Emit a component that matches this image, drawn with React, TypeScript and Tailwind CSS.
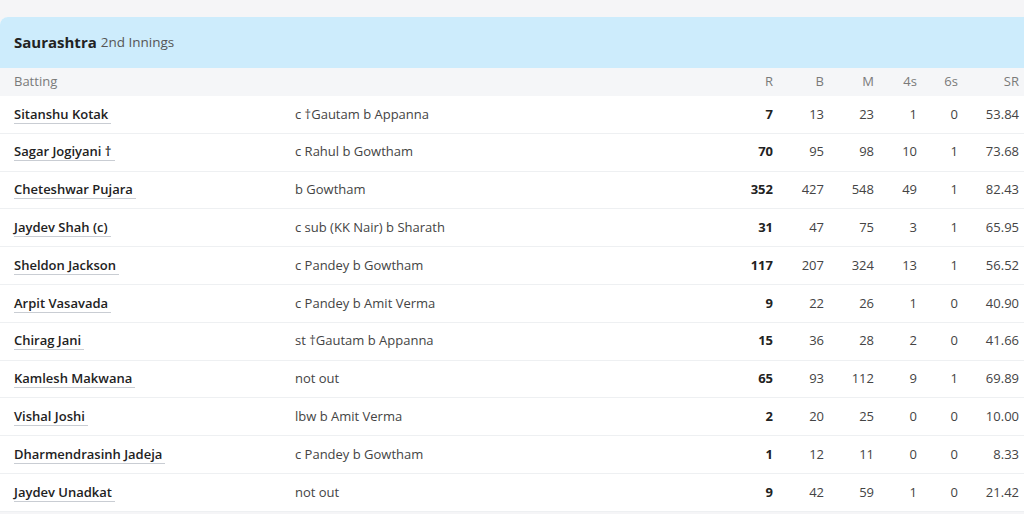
import React from 'react';

type Row = {
  name: string;
  out: string;
  r: string;
  b: string;
  m: string;
  fours: string;
  sixes: string;
  sr: string;
};

const rows: Row[] = [
  { name: 'Sitanshu Kotak', out: 'c \u2020Gautam b Appanna', r: '7', b: '13', m: '23', fours: '1', sixes: '0', sr: '53.84' },
  { name: 'Sagar Jogiyani \u2020', out: 'c Rahul b Gowtham', r: '70', b: '95', m: '98', fours: '10', sixes: '1', sr: '73.68' },
  { name: 'Cheteshwar Pujara', out: 'b Gowtham', r: '352', b: '427', m: '548', fours: '49', sixes: '1', sr: '82.43' },
  { name: 'Jaydev Shah (c)', out: 'c sub (KK Nair) b Sharath', r: '31', b: '47', m: '75', fours: '3', sixes: '1', sr: '65.95' },
  { name: 'Sheldon Jackson', out: 'c Pandey b Gowtham', r: '117', b: '207', m: '324', fours: '13', sixes: '1', sr: '56.52' },
  { name: 'Arpit Vasavada', out: 'c Pandey b Amit Verma', r: '9', b: '22', m: '26', fours: '1', sixes: '0', sr: '40.90' },
  { name: 'Chirag Jani', out: 'st \u2020Gautam b Appanna', r: '15', b: '36', m: '28', fours: '2', sixes: '0', sr: '41.66' },
  { name: 'Kamlesh Makwana', out: 'not out', r: '65', b: '93', m: '112', fours: '9', sixes: '1', sr: '69.89' },
  { name: 'Vishal Joshi', out: 'lbw b Amit Verma', r: '2', b: '20', m: '25', fours: '0', sixes: '0', sr: '10.00' },
  { name: 'Dharmendrasinh Jadeja', out: 'c Pandey b Gowtham', r: '1', b: '12', m: '11', fours: '0', sixes: '0', sr: '8.33' },
  { name: 'Jaydev Unadkat', out: 'not out', r: '9', b: '42', m: '59', fours: '1', sixes: '0', sr: '21.42' },
];

const grid = 'grid grid-cols-[281px_1fr_80px_51px_50px_43px_41px_61px] items-center pl-[14px] pr-[5px]';

export default function App() {
  return (
    <div className="w-[1024px] h-[514px] overflow-hidden bg-[#f5f5f7] pt-[17px] font-['Open_Sans',sans-serif] text-[13px]">
      <div className="bg-white rounded-tl-[8px] overflow-hidden">
        {/* innings header */}
        <div className="h-[51px] bg-[#cdecfc] flex items-center px-[14px] gap-[4px]">
          <span className="text-[15px] font-bold text-[#222]">Saurashtra</span>
          <span className="text-[13.5px] text-[#555]">2nd Innings</span>
        </div>

        <div className={`${grid} h-[28px] bg-[#f5f6f8] text-[#7a7a7a]`}>
          <div>Batting</div>
          <div />
          <div className="text-right">R</div>
          <div className="text-right">B</div>
          <div className="text-right">M</div>
          <div className="text-right">4s</div>
          <div className="text-right">6s</div>
          <div className="text-right">SR</div>
        </div>

        {rows.map((row) => (
          <div key={row.name} className={`${grid} h-[37.8px] border-b border-[#eef0f2] text-[#444]`}>
            <div>
              <span className="font-semibold text-[#222] border-b border-[#c9cdd3] pr-[3px] leading-[17px] inline-block">
                {row.name}
              </span>
            </div>
            <div>{row.out}</div>
            <div className="text-right font-bold text-[#222]">{row.r}</div>
            <div className="text-right">{row.b}</div>
            <div className="text-right">{row.m}</div>
            <div className="text-right">{row.fours}</div>
            <div className="text-right">{row.sixes}</div>
            <div className="text-right">{row.sr}</div>
          </div>
        ))}
      </div>
    </div>
  );
}
